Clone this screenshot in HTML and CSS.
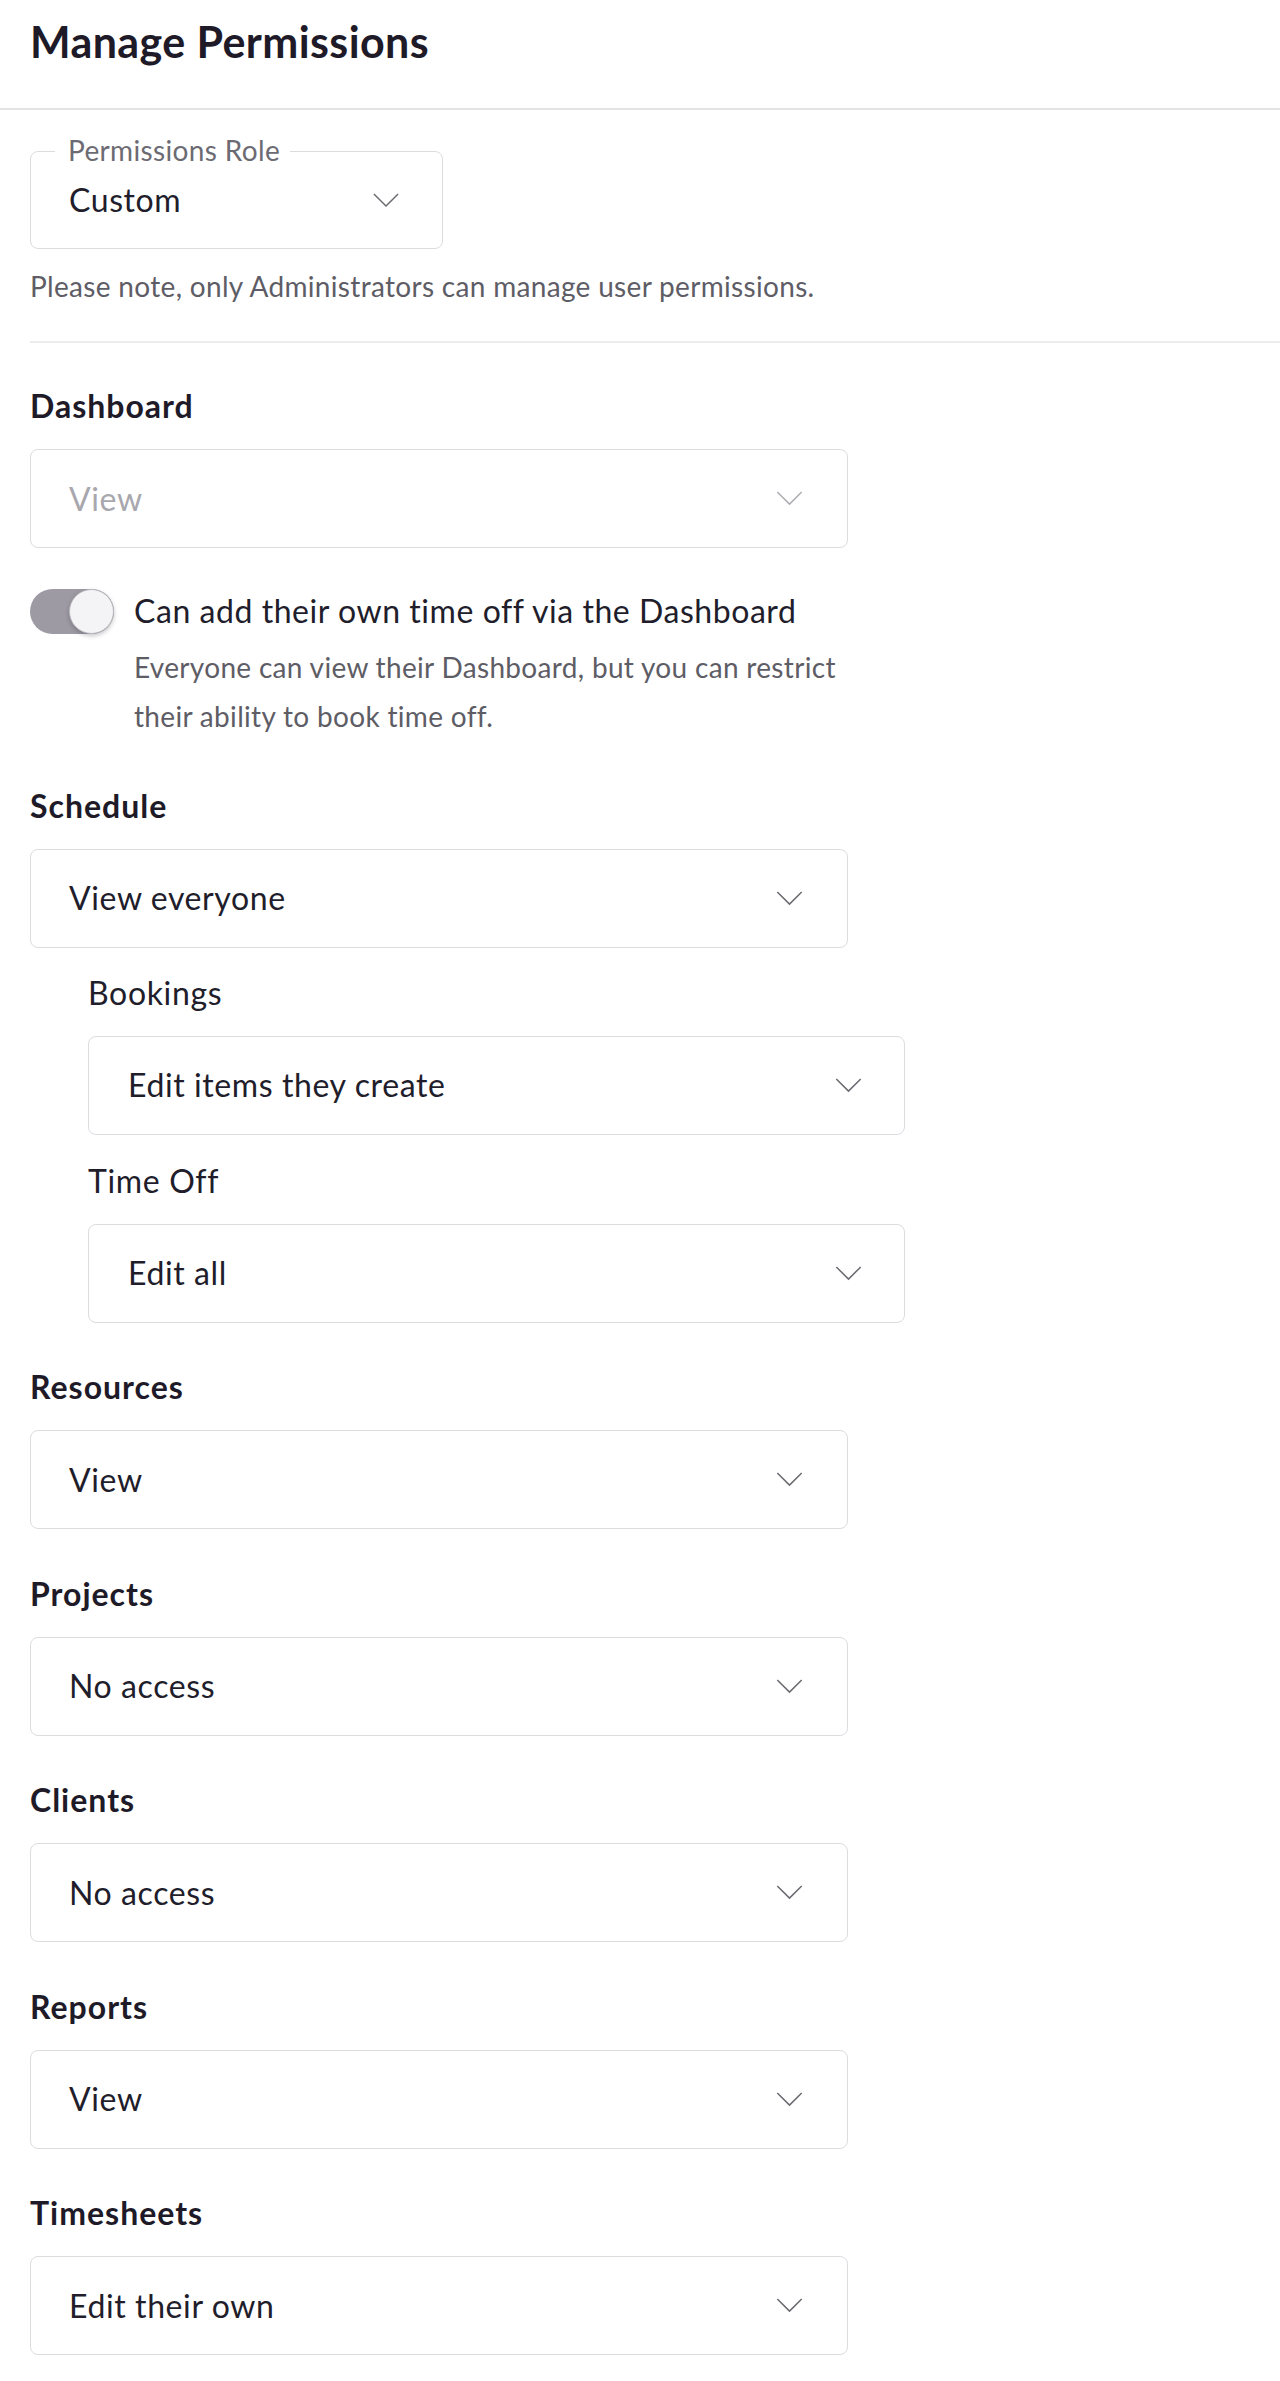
FILE: index.html
```html
<!DOCTYPE html>
<html lang="en">
<head>
<meta charset="utf-8">
<title>Manage Permissions</title>
<link rel="stylesheet" href="styles.css">
</head>
<body>
<div class="page">
  <header class="header">
    <h1 class="title">Manage Permissions</h1>
  </header>

  <div class="role-area">
    <div class="role-select">
      <span class="role-label">Permissions Role</span>
      <span class="select-value">Custom</span>
      <svg class="chevron" viewBox="0 0 28 16" width="26" height="15"><polyline points="1,1 14,14 27,1" /></svg>
    </div>
    <p class="note">Please note, only Administrators can manage user permissions.</p>
  </div>

  <div class="perm-list">
    <section class="perm">
      <h2 class="perm-title">Dashboard</h2>
      <div class="select is-disabled">
        <span class="select-value">View</span>
        <svg class="chevron" viewBox="0 0 28 16" width="27" height="15"><polyline points="1,1 14,14 27,1" /></svg>
      </div>
      <div class="toggle-row">
        <span class="toggle"><span class="toggle-knob"></span></span>
        <div class="toggle-text">
          <div class="toggle-label">Can add their own time off via the Dashboard</div>
          <p class="toggle-desc">Everyone can view their Dashboard, but you can restrict their ability to book time off.</p>
        </div>
      </div>
    </section>

    <section class="perm">
      <h2 class="perm-title">Schedule</h2>
      <div class="select">
        <span class="select-value">View everyone</span>
        <svg class="chevron" viewBox="0 0 28 16" width="27" height="15"><polyline points="1,1 14,14 27,1" /></svg>
      </div>
      <div class="sub-perms">
        <div class="sub-perm">
          <div class="sub-title">Bookings</div>
          <div class="select">
            <span class="select-value">Edit items they create</span>
            <svg class="chevron" viewBox="0 0 28 16" width="27" height="15"><polyline points="1,1 14,14 27,1" /></svg>
          </div>
        </div>
        <div class="sub-perm">
          <div class="sub-title">Time Off</div>
          <div class="select">
            <span class="select-value">Edit all</span>
            <svg class="chevron" viewBox="0 0 28 16" width="27" height="15"><polyline points="1,1 14,14 27,1" /></svg>
          </div>
        </div>
      </div>
    </section>

    <section class="perm">
      <h2 class="perm-title">Resources</h2>
      <div class="select">
        <span class="select-value">View</span>
        <svg class="chevron" viewBox="0 0 28 16" width="27" height="15"><polyline points="1,1 14,14 27,1" /></svg>
      </div>
    </section>

    <section class="perm">
      <h2 class="perm-title">Projects</h2>
      <div class="select">
        <span class="select-value">No access</span>
        <svg class="chevron" viewBox="0 0 28 16" width="27" height="15"><polyline points="1,1 14,14 27,1" /></svg>
      </div>
    </section>

    <section class="perm">
      <h2 class="perm-title">Clients</h2>
      <div class="select">
        <span class="select-value">No access</span>
        <svg class="chevron" viewBox="0 0 28 16" width="27" height="15"><polyline points="1,1 14,14 27,1" /></svg>
      </div>
    </section>

    <section class="perm">
      <h2 class="perm-title">Reports</h2>
      <div class="select">
        <span class="select-value">View</span>
        <svg class="chevron" viewBox="0 0 28 16" width="27" height="15"><polyline points="1,1 14,14 27,1" /></svg>
      </div>
    </section>

    <section class="perm">
      <h2 class="perm-title">Timesheets</h2>
      <div class="select">
        <span class="select-value">Edit their own</span>
        <svg class="chevron" viewBox="0 0 28 16" width="27" height="15"><polyline points="1,1 14,14 27,1" /></svg>
      </div>
    </section>
  </div>
</div>
</body>
</html>
```

FILE: styles.css
```css
* {
  box-sizing: border-box;
}

html, body {
  margin: 0;
  padding: 0;
  background: #ffffff;
}

body {
  font-family: Lato, "Open Sans", "Liberation Sans", sans-serif;
  color: #211d2b;
}

.page {
  width: 1280px;
}

.header {
  height: 110px;
  padding: 17px 30px 0;
  border-bottom: 2px solid #e3e3e6;
}

.title {
  margin: 0;
  font-size: 43px;
  line-height: 50px;
  font-weight: 700;
  letter-spacing: 0.4px;
  color: #1e1a28;
}

.role-area {
  padding: 41px 0 0 30px;
}

.role-select {
  position: relative;
  width: 413px;
  height: 98px;
  border: 1.5px solid #dcdbe0;
  border-radius: 8px;
  display: flex;
  align-items: center;
  justify-content: space-between;
  padding: 0 43px 0 38px;
}

.role-label {
  position: absolute;
  top: -19px;
  left: 24px;
  padding: 0 10px 0 13px;
  background: #ffffff;
  font-size: 28px;
  line-height: 34px;
  letter-spacing: 0.35px;
  color: #6c6b73;
}

.select-value {
  font-size: 32px;
  line-height: 36px;
  letter-spacing: 0.6px;
  color: #211d2b;
}

.chevron {
  display: block;
  flex: none;
}

.chevron polyline {
  fill: none;
  stroke: #6b6a71;
  stroke-width: 1.6;
}

.note {
  margin: 16px 0 0;
  font-size: 28px;
  line-height: 42px;
  letter-spacing: 0.32px;
  color: #5e5d66;
}

.perm-list {
  margin-left: 30px;
  margin-top: 34px;
  border-top: 2px solid #ececee;
  padding-top: 45px;
}

.perm + .perm {
  margin-top: 46.5px;
}

.perm-title {
  margin: 0 0 25px;
  font-size: 32px;
  line-height: 36px;
  font-weight: 700;
  letter-spacing: 1px;
  color: #1e1a28;
}

.select {
  width: 818px;
  height: 99px;
  border: 1.5px solid #dcdbe0;
  border-radius: 8px;
  display: flex;
  align-items: center;
  justify-content: space-between;
  padding: 0 44px 0 38px;
}

.select.is-disabled .select-value {
  color: #a8a7ae;
}

.select.is-disabled .chevron polyline {
  stroke: #aeadb3;
}

.toggle-row {
  display: flex;
  align-items: flex-start;
  gap: 20px;
  margin-top: 41px;
}

.toggle {
  position: relative;
  flex: none;
  width: 84px;
  height: 45px;
  border-radius: 23px;
  background: #9d9aa4;
}

.toggle-knob {
  position: absolute;
  top: 0;
  right: 0;
  width: 45px;
  height: 45px;
  border-radius: 50%;
  background: #f4f4f6;
  border: 1.5px solid #b9b8be;
  box-shadow: 0 2px 4px rgba(30, 26, 40, 0.25);
}

.toggle-text {
  padding-top: 4px;
}

.toggle-label {
  font-size: 32px;
  line-height: 36px;
  letter-spacing: 0.55px;
  color: #211d2b;
}

.toggle-desc {
  width: 716px;
  margin: 14px 0 0;
  font-size: 28px;
  line-height: 49px;
  letter-spacing: 0.32px;
  color: #5e5d66;
}

.sub-perms {
  padding-left: 58px;
  padding-top: 27px;
}

.sub-perm + .sub-perm {
  margin-top: 28px;
}

.sub-title {
  margin-bottom: 25px;
  font-size: 32px;
  line-height: 36px;
  letter-spacing: 0.65px;
  color: #211d2b;
}

.sub-perms .select {
  width: 817px;
  padding-left: 39px;
  padding-right: 42px;
}
```
